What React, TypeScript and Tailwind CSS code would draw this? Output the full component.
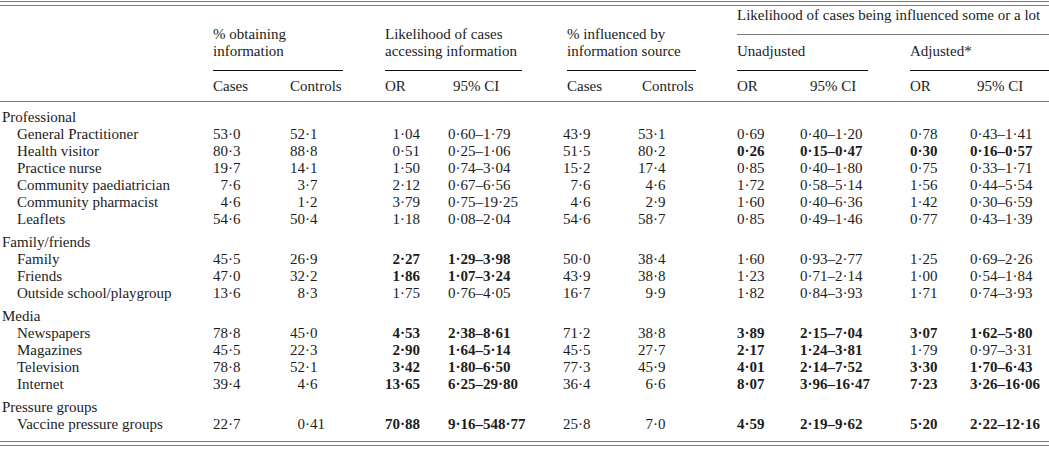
import React from "react";

const cols = "grid grid-cols-[213px_77px_95px_63px_115px_75px_99px_63px_110px_60px_79px]";

// int-part slot width per numeric column (0 = free text, e.g. CI)
const slots = [2, 2, 2, 0, 2, 2, 1, 0, 1, 0];

type Row = { label: string; v?: string[] };
type Group = { title: string; rows: Row[] };

const groups: Group[] = [
  {
    title: "Professional",
    rows: [
      { label: "General Practitioner", v: ["53·0", "52·1", "1·04", "0·60–1·79", "43·9", "53·1", "0·69", "0·40–1·20", "0·78", "0·43–1·41"] },
      { label: "Health visitor", v: ["80·3", "88·8", "0·51", "0·25–1·06", "51·5", "80·2", "*0·26", "*0·15–0·47", "*0·30", "*0·16–0·57"] },
      { label: "Practice nurse", v: ["19·7", "14·1", "1·50", "0·74–3·04", "15·2", "17·4", "0·85", "0·40–1·80", "0·75", "0·33–1·71"] },
      { label: "Community paediatrician", v: ["7·6", "3·7", "2·12", "0·67–6·56", "7·6", "4·6", "1·72", "0·58–5·14", "1·56", "0·44–5·54"] },
      { label: "Community pharmacist", v: ["4·6", "1·2", "3·79", "0·75–19·25", "4·6", "2·9", "1·60", "0·40–6·36", "1·42", "0·30–6·59"] },
      { label: "Leaflets", v: ["54·6", "50·4", "1·18", "0·08–2·04", "54·6", "58·7", "0·85", "0·49–1·46", "0·77", "0·43–1·39"] },
    ],
  },
  {
    title: "Family/friends",
    rows: [
      { label: "Family", v: ["45·5", "26·9", "*2·27", "*1·29–3·98", "50·0", "38·4", "1·60", "0·93–2·77", "1·25", "0·69–2·26"] },
      { label: "Friends", v: ["47·0", "32·2", "*1·86", "*1·07–3·24", "43·9", "38·8", "1·23", "0·71–2·14", "1·00", "0·54–1·84"] },
      { label: "Outside school/playgroup", v: ["13·6", "8·3", "1·75", "0·76–4·05", "16·7", "9·9", "1·82", "0·84–3·93", "1·71", "0·74–3·93"] },
    ],
  },
  {
    title: "Media",
    rows: [
      { label: "Newspapers", v: ["78·8", "45·0", "*4·53", "*2·38–8·61", "71·2", "38·8", "*3·89", "*2·15–7·04", "*3·07", "*1·62–5·80"] },
      { label: "Magazines", v: ["45·5", "22·3", "*2·90", "*1·64–5·14", "45·5", "27·7", "*2·17", "*1·24–3·81", "1·79", "0·97–3·31"] },
      { label: "Television", v: ["78·8", "52·1", "*3·42", "*1·80–6·50", "77·3", "45·9", "*4·01", "*2·14–7·52", "*3·30", "*1·70–6·43"] },
      { label: "Internet", v: ["39·4", "4·6", "*13·65", "*6·25–29·80", "36·4", "6·6", "*8·07", "*3·96–16·47", "*7·23", "*3·26–16·06"] },
    ],
  },
  {
    title: "Pressure groups",
    rows: [
      { label: "Vaccine pressure groups", v: ["22·7", "0·41", "*70·88", "*9·16–548·77", "25·8", "7·0", "*4·59", "*2·19–9·62", "*5·20", "*2·22–12·16"] },
    ],
  },
];

function Cell({ raw, slot }: { raw: string; slot: number }) {
  const bold = raw.startsWith("*");
  const s = bold ? raw.slice(1) : raw;
  const cls = bold ? "font-bold" : "";
  if (slot === 0) return <div className={cls}>{s}</div>;
  const [i, f] = s.split("·");
  return (
    <div className={cls}>
      <span className={slot === 2 ? "inline-block w-[2ch] text-right" : "inline-block w-[1ch] text-right"}>{i}</span>
      <span>·{f}</span>
    </div>
  );
}

function Rule() {
  return (
    <div>
      <div className="h-px bg-[#7a7a7a]" />
      <div className="mt-[3px] h-px bg-[#7a7a7a]" />
    </div>
  );
}

export default function App() {
  return (
    <div className="w-[1049px] h-[451px] bg-white text-[#1c1c1c] text-[15px] leading-[17px] overflow-hidden" style={{ fontFamily: '"Liberation Serif", "Times New Roman", serif' }}>
      <div className="pt-[1px]">
        <Rule />
      </div>

      {/* header */}
      <div className={cols}>
        <div className="col-start-2 col-span-2 row-start-1 row-span-2 flex flex-col justify-end">
          <div className="w-[130px] border-b border-[#111] pb-[10px]">
            % obtaining
            <br />
            information
          </div>
        </div>
        <div className="col-start-4 col-span-2 row-start-1 row-span-2 flex flex-col justify-end">
          <div className="w-[137px] border-b border-[#111] pb-[10px]">
            Likelihood of cases
            <br />
            accessing information
          </div>
        </div>
        <div className="col-start-6 col-span-2 row-start-1 row-span-2 flex flex-col justify-end pl-[4px]">
          <div className="w-[129px] border-b border-[#111] pb-[10px]">
            % influenced by
            <br />
            information source
          </div>
        </div>
        <div className="col-start-8 col-span-4 row-start-1 pt-[1px] pb-[10px] border-b border-[#7a7a7a] whitespace-nowrap">
          Likelihood of cases being influenced some or a lot
        </div>
        <div className="col-start-8 col-span-2 row-start-2">
          <div className="w-[131px] border-b border-[#111] pt-[8px] pb-[10px]">Unadjusted</div>
        </div>
        <div className="col-start-10 col-span-2 row-start-2">
          <div className="border-b border-[#111] pt-[8px] pb-[10px]">Adjusted*</div>
        </div>

        <div className="col-start-2 row-start-3 pt-[7px] pb-[6px]">Cases</div>
        <div className="col-start-3 row-start-3 pt-[7px] pb-[6px]">Controls</div>
        <div className="col-start-4 row-start-3 pt-[7px] pb-[6px]">OR</div>
        <div className="col-start-5 row-start-3 pt-[7px] pb-[6px] pl-[5px]">95% CI</div>
        <div className="col-start-6 row-start-3 pt-[7px] pb-[6px] pl-[4px]">Cases</div>
        <div className="col-start-7 row-start-3 pt-[7px] pb-[6px] pl-[4px]">Controls</div>
        <div className="col-start-8 row-start-3 pt-[7px] pb-[6px]">OR</div>
        <div className="col-start-9 row-start-3 pt-[7px] pb-[6px] pl-[10px]">95% CI</div>
        <div className="col-start-10 row-start-3 pt-[7px] pb-[6px]">OR</div>
        <div className="col-start-11 row-start-3 pt-[7px] pb-[6px] pl-[7px]">95% CI</div>
      </div>
      <div className="h-px bg-[#7a7a7a]" />

      {/* body */}
      <div className="pt-[7px] pb-[8px]">
        {groups.map((g, gi) => (
          <div key={g.title} className={gi === 0 ? "" : "mt-[6px]"}>
            <div className="pl-[2px]">{g.title}</div>
            {g.rows.map((r) => (
              <div key={r.label} className={cols}>
                <div className="pl-[17px]">{r.label}</div>
                {r.v!.map((x, i) => (
                  <Cell key={i} raw={x} slot={slots[i]} />
                ))}
              </div>
            ))}
          </div>
        ))}
      </div>
      <Rule />
    </div>
  );
}
